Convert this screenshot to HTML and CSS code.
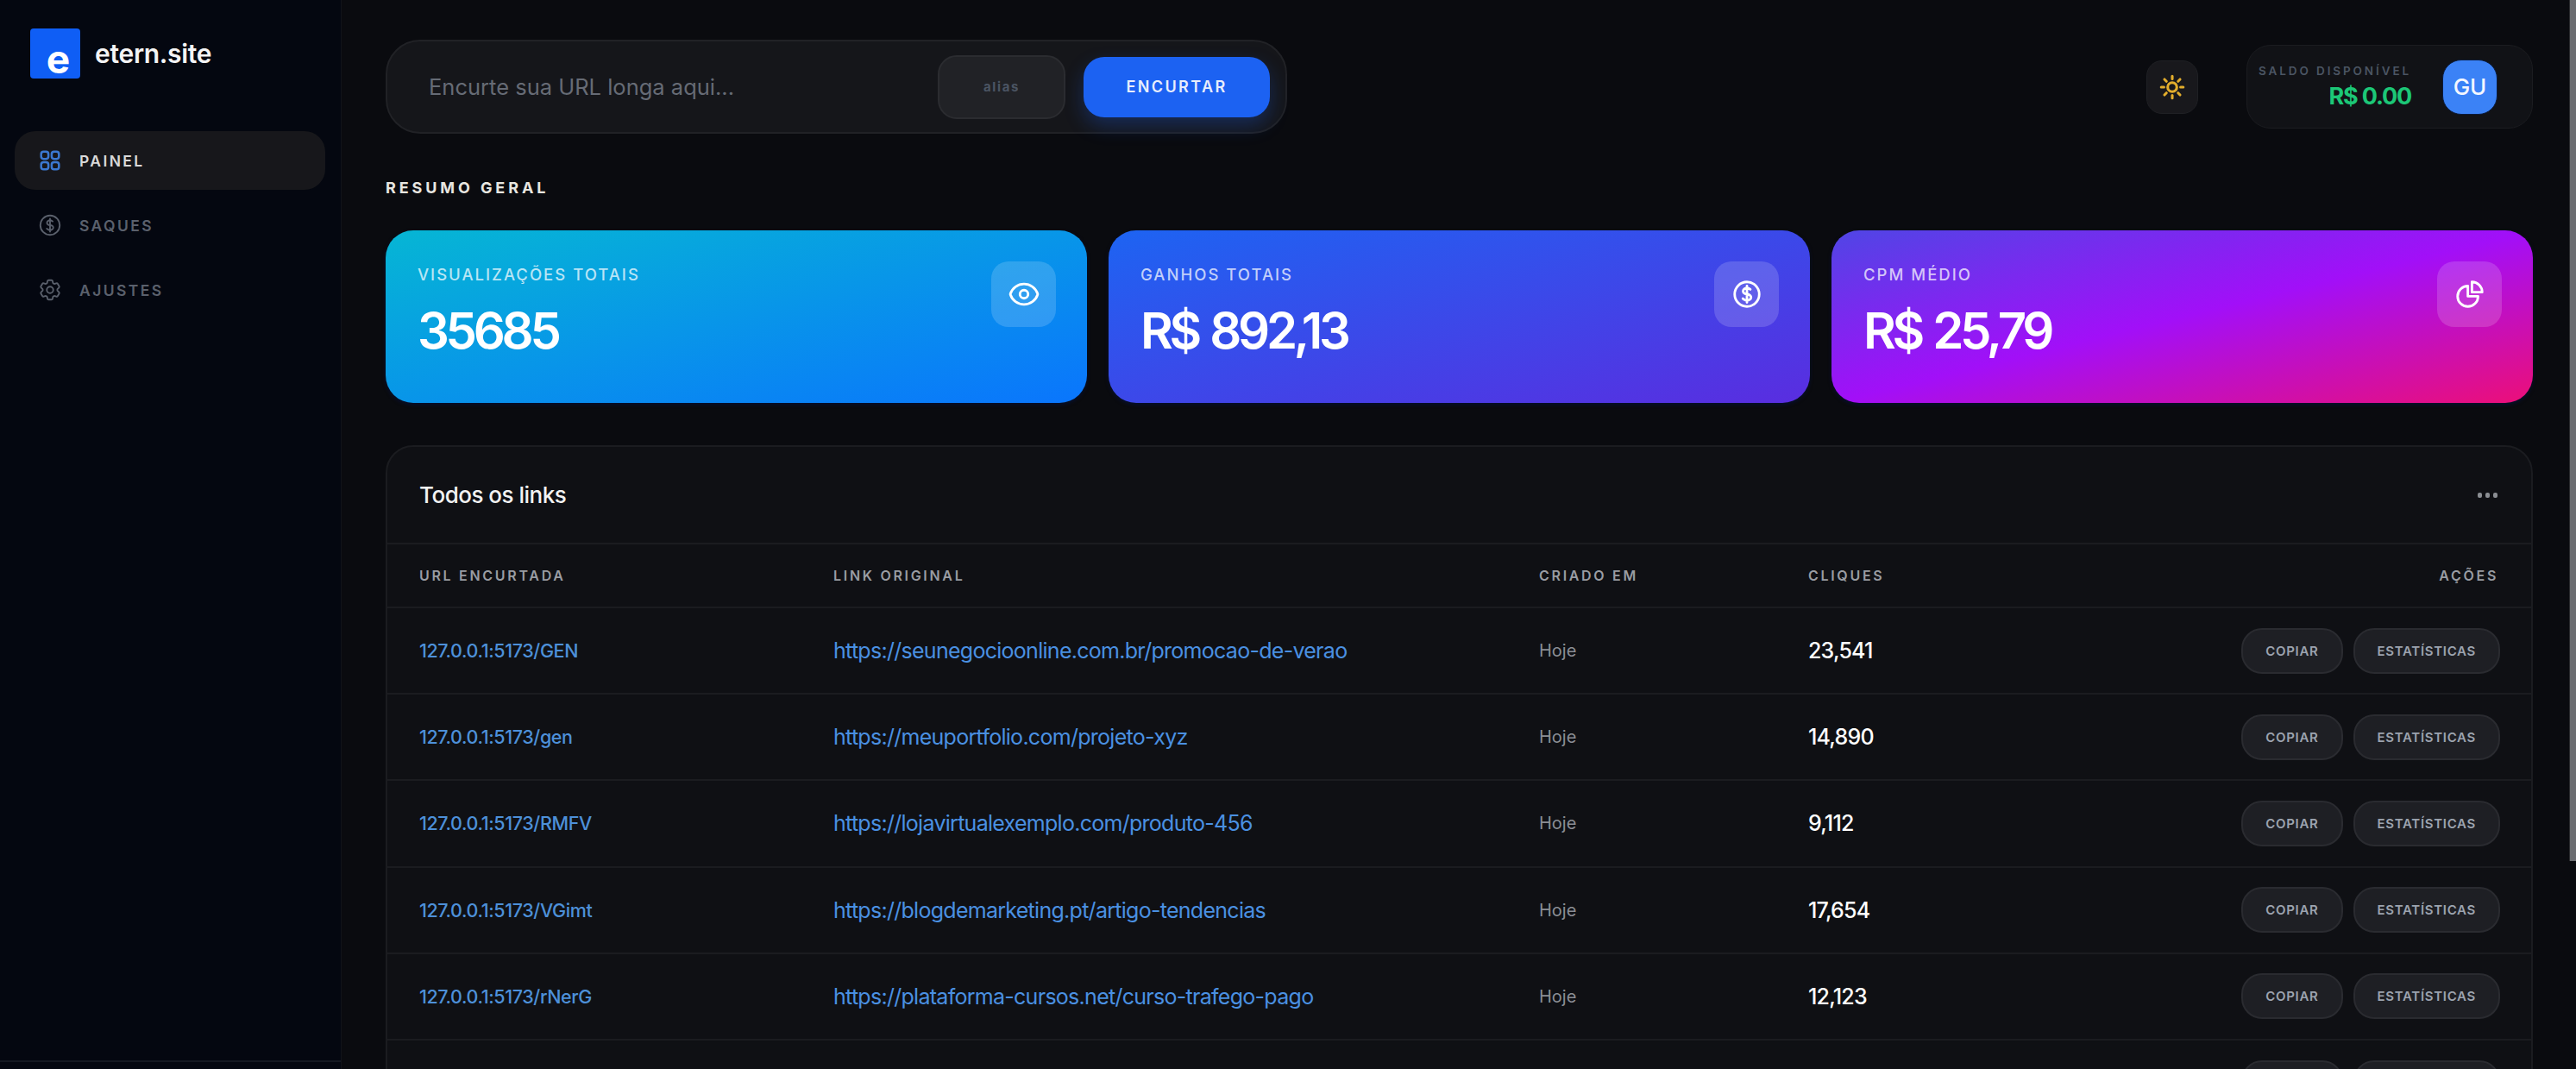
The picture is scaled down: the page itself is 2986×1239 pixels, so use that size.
FILE: index.html
```html
<!DOCTYPE html>
<html lang="pt-BR">
<head>
<meta charset="utf-8">
<title>etern.site</title>
<link rel="stylesheet" href="styles.css">
</head>
<body>
<aside class="sidebar">
  <div class="brand">
    <div class="brand-mark"><span>e</span></div>
    <span class="brand-name">etern.site</span>
  </div>
  <nav class="nav">
    <a class="nav-item active">
      <svg class="nav-icon" viewBox="0 0 24 24"><rect x="3.75" y="3.75" width="6.75" height="6.75" rx="2.25"/><rect x="3.75" y="13.5" width="6.75" height="6.75" rx="2.25"/><rect x="13.5" y="3.75" width="6.75" height="6.75" rx="2.25"/><rect x="13.5" y="13.5" width="6.75" height="6.75" rx="2.25"/></svg>
      <span>PAINEL</span>
    </a>
    <a class="nav-item">
      <svg class="nav-icon" viewBox="0 0 24 24"><path d="M12 6v12m-3-2.818.879.659c1.171.879 3.07.879 4.242 0 1.172-.879 1.172-2.303 0-3.182C13.536 12.219 12.768 12 12 12c-.725 0-1.45-.22-2.003-.659-1.106-.879-1.106-2.303 0-3.182s2.9-.879 4.006 0l.415.33M21 12a9 9 0 1 1-18 0 9 9 0 0 1 18 0Z"/></svg>
      <span>SAQUES</span>
    </a>
    <a class="nav-item">
      <svg class="nav-icon" viewBox="0 0 24 24"><path d="M9.594 3.94c.09-.542.56-.94 1.11-.94h2.593c.55 0 1.02.398 1.11.94l.213 1.281c.063.374.313.686.645.87.074.04.147.083.22.127.325.196.72.257 1.075.124l1.217-.456a1.125 1.125 0 0 1 1.37.49l1.296 2.247a1.125 1.125 0 0 1-.26 1.431l-1.003.827c-.293.241-.438.613-.43.992a7.723 7.723 0 0 1 0 .255c-.008.378.137.75.43.991l1.004.827c.424.35.534.955.26 1.43l-1.298 2.247a1.125 1.125 0 0 1-1.369.491l-1.217-.456c-.355-.133-.75-.072-1.076.124a6.47 6.47 0 0 1-.22.128c-.331.183-.581.495-.644.869l-.213 1.281c-.09.543-.56.94-1.11.94h-2.594c-.55 0-1.019-.398-1.11-.94l-.213-1.281c-.062-.374-.312-.686-.644-.87a6.52 6.52 0 0 1-.22-.127c-.325-.196-.72-.257-1.076-.124l-1.217.456a1.125 1.125 0 0 1-1.369-.49l-1.297-2.247a1.125 1.125 0 0 1 .26-1.431l1.004-.827c.292-.24.437-.613.43-.991a6.932 6.932 0 0 1 0-.255c.007-.38-.138-.751-.43-.992l-1.004-.827a1.125 1.125 0 0 1-.26-1.43l1.297-2.247a1.125 1.125 0 0 1 1.37-.491l1.216.456c.356.133.751.072 1.076-.124.072-.044.146-.086.22-.128.332-.183.582-.495.644-.869l.214-1.28Z"/><path d="M15 12a3 3 0 1 1-6 0 3 3 0 0 1 6 0Z"/></svg>
      <span>AJUSTES</span>
    </a>
  </nav>
  <div class="sidebar-foot"></div>
</aside>

<main class="main">
  <header class="topbar">
    <form class="shorten">
      <span class="shorten-placeholder">Encurte sua URL longa aqui...</span>
      <span class="alias">alias</span>
      <button class="shorten-btn" type="button">ENCURTAR</button>
    </form>
    <div class="top-right">
      <button class="theme-btn" type="button">
        <svg viewBox="0 0 24 24"><path d="M12 3v2.25m6.364.386-1.591 1.591M21 12h-2.25m-.386 6.364-1.591-1.591M12 18.75V21m-4.773-4.227-1.591 1.591M5.25 12H3m4.227-4.773L5.636 5.636M15.75 12a3.75 3.75 0 1 1-7.5 0 3.75 3.75 0 0 1 7.5 0Z"/></svg>
      </button>
      <div class="balance">
        <div class="balance-text">
          <span class="balance-label">SALDO DISPONÍVEL</span>
          <span class="balance-value">R$ 0.00</span>
        </div>
        <div class="avatar">GU</div>
      </div>
    </div>
  </header>

  <h2 class="section-title">RESUMO GERAL</h2>

  <section class="stats">
    <article class="stat stat-cyan">
      <div>
        <div class="stat-label">VISUALIZAÇÕES TOTAIS</div>
        <div class="stat-value">35685</div>
      </div>
      <div class="stat-icon"><svg viewBox="0 0 24 24"><path d="M2.036 12.322a1.012 1.012 0 0 1 0-.639C3.423 7.51 7.36 4.5 12 4.5c4.638 0 8.573 3.007 9.963 7.178.07.207.07.431 0 .639C20.577 16.49 16.64 19.5 12 19.5c-4.638 0-8.573-3.007-9.963-7.178Z"/><path d="M15 12a3 3 0 1 1-6 0 3 3 0 0 1 6 0Z"/></svg></div>
    </article>
    <article class="stat stat-blue">
      <div>
        <div class="stat-label">GANHOS TOTAIS</div>
        <div class="stat-value">R$ 892,13</div>
      </div>
      <div class="stat-icon"><svg viewBox="0 0 24 24"><path d="M12 6v12m-3-2.818.879.659c1.171.879 3.07.879 4.242 0 1.172-.879 1.172-2.303 0-3.182C13.536 12.219 12.768 12 12 12c-.725 0-1.45-.22-2.003-.659-1.106-.879-1.106-2.303 0-3.182s2.9-.879 4.006 0l.415.33M21 12a9 9 0 1 1-18 0 9 9 0 0 1 18 0Z"/></svg></div>
    </article>
    <article class="stat stat-purple">
      <div>
        <div class="stat-label">CPM MÉDIO</div>
        <div class="stat-value">R$ 25,79</div>
      </div>
      <div class="stat-icon"><svg viewBox="0 0 24 24"><path d="M10.5 6a7.5 7.5 0 1 0 7.5 7.5h-7.5V6Z"/><path d="M13.5 10.5H21A7.5 7.5 0 0 0 13.5 3v7.5Z"/></svg></div>
    </article>
  </section>

  <section class="links">
    <div class="links-head">
      <h3>Todos os links</h3>
      <div class="more"><i></i><i></i><i></i></div>
    </div>
    <table class="links-table">
      <colgroup>
        <col class="c-short"><col class="c-orig"><col class="c-date"><col class="c-clicks"><col>
      </colgroup>
      <thead>
        <tr><th>URL ENCURTADA</th><th>LINK ORIGINAL</th><th>CRIADO EM</th><th>CLIQUES</th><th class="right">AÇÕES</th></tr>
      </thead>
      <tbody>
        <tr>
          <td class="short">127.0.0.1:5173/GEN</td>
          <td class="orig">https://seunegocioonline.com.br/promocao-de-verao</td>
          <td class="date">Hoje</td>
          <td class="clicks">23,541</td>
          <td class="right"><div class="actions"><button type="button">COPIAR</button><button type="button">ESTATÍSTICAS</button></div></td>
        </tr>
        <tr>
          <td class="short">127.0.0.1:5173/gen</td>
          <td class="orig">https://meuportfolio.com/projeto-xyz</td>
          <td class="date">Hoje</td>
          <td class="clicks">14,890</td>
          <td class="right"><div class="actions"><button type="button">COPIAR</button><button type="button">ESTATÍSTICAS</button></div></td>
        </tr>
        <tr>
          <td class="short">127.0.0.1:5173/RMFV</td>
          <td class="orig">https://lojavirtualexemplo.com/produto-456</td>
          <td class="date">Hoje</td>
          <td class="clicks">9,112</td>
          <td class="right"><div class="actions"><button type="button">COPIAR</button><button type="button">ESTATÍSTICAS</button></div></td>
        </tr>
        <tr>
          <td class="short">127.0.0.1:5173/VGimt</td>
          <td class="orig">https://blogdemarketing.pt/artigo-tendencias</td>
          <td class="date">Hoje</td>
          <td class="clicks">17,654</td>
          <td class="right"><div class="actions"><button type="button">COPIAR</button><button type="button">ESTATÍSTICAS</button></div></td>
        </tr>
        <tr>
          <td class="short">127.0.0.1:5173/rNerG</td>
          <td class="orig">https://plataforma-cursos.net/curso-trafego-pago</td>
          <td class="date">Hoje</td>
          <td class="clicks">12,123</td>
          <td class="right"><div class="actions"><button type="button">COPIAR</button><button type="button">ESTATÍSTICAS</button></div></td>
        </tr>
        <tr>
          <td class="short"></td>
          <td class="orig"></td>
          <td class="date"></td>
          <td class="clicks"></td>
          <td class="right"><div class="actions"><button type="button">COPIAR</button><button type="button">ESTATÍSTICAS</button></div></td>
        </tr>
      </tbody>
    </table>
  </section>
</main>
<div class="scroll-thumb"></div>
</body>
</html>
```
FILE: styles.css
```css
* { box-sizing: border-box; }
html, body { margin: 0; height: 100%; }
body {
  display: flex;
  align-items: flex-start;
  height: 1239px;
  overflow: hidden;
  background: #0a0b0f;
  color: #fff;
  font-family: Inter, "Liberation Sans", sans-serif;
}
svg { fill: none; stroke: currentColor; stroke-width: 1.5; stroke-linecap: round; stroke-linejoin: round; display: block; }

.sidebar {
  width: 396px;
  flex: none;
  height: 100%;
  background: #040710;
  border-right: 1px solid #12141a;
  display: flex;
  flex-direction: column;
  padding: 33px 18px 0 17px;
}
.brand { display: flex; align-items: center; gap: 17px; padding-left: 18px; }
.brand-mark {
  width: 58px; height: 58px; background: #0f5ef5; border-radius: 4px;
  display: flex; align-items: flex-end; justify-content: center;
  padding-left: 7px;
}
.brand-mark span { font-size: 46px; font-weight: 700; line-height: 46px; margin-bottom: 0; }
.brand-name { font-size: 30px; font-weight: 600; letter-spacing: -.3px; color: #f4f4f5; }
.nav { margin-top: 61px; display: flex; flex-direction: column; gap: 7px; }
.nav-item {
  height: 68px; border-radius: 24px; display: flex; align-items: center; gap: 19px;
  padding-left: 27px; color: #5a606c; font-size: 17.5px; font-weight: 600; letter-spacing: 2.4px;
}
.nav-item.active { background: #17171b; color: #d9d9d9; }
.nav-item.active .nav-icon { color: #3b78d0; stroke-width: 2; }
.nav-icon { width: 30px; height: 30px; margin-left: -1px; }
.sidebar-foot { margin: auto -18px 8px -17px; border-top: 2px solid #141821; }

.main { flex: 1; min-width: 0; padding: 46px 42px 0 51px; }

.topbar { display: flex; justify-content: space-between; align-items: center; height: 109px; }
.shorten {
  width: 1045px; height: 109px; border-radius: 40px; background: #15161a; border: 2px solid #212226;
  display: flex; align-items: center; padding: 0 18px 0 48px; margin: 0;
}
.shorten-placeholder { flex: 1; color: #666b75; font-size: 25.5px; }
.alias {
  width: 148px; height: 74px; border-radius: 22px; background: #212226; border: 2px solid #2b2c30;
  display: flex; align-items: center; justify-content: center;
  color: #4b5563; font-size: 15px; font-weight: 700; letter-spacing: 1.6px;
}
.shorten-btn {
  width: 216px; height: 70px; margin-left: 21px; border: 0; border-radius: 24px; background: #1c62f2;
  color: #e8eefc; font: 600 18px Inter, sans-serif; letter-spacing: 2.4px;
  box-shadow: 0 10px 22px rgba(28, 98, 242, .28);
}
.top-right { display: flex; align-items: center; gap: 56px; }
.theme-btn {
  width: 60px; height: 62px; padding: 0; border: 1px solid #1f2024; border-radius: 18px; background: #18181c; color: #e2ad2c;
  display: flex; align-items: center; justify-content: center;
}
.theme-btn svg { width: 34px; height: 34px; stroke-width: 2.2; }
.balance {
  width: 332px; height: 97px; border-radius: 28px; background: #111216; border: 1px solid #1b1c20;
  display: flex; align-items: center; padding: 0 40px 0 13px; justify-content: space-between;
}
.balance-text { display: flex; flex-direction: column; align-items: flex-end; gap: 7px; }
.balance-label { color: #4b5563; font-size: 13.5px; font-weight: 600; letter-spacing: 2.9px; white-space: nowrap; }
.balance-value { color: #1cc777; font-size: 27px; font-weight: 700; line-height: 30px; letter-spacing: -1.2px; }
.avatar {
  width: 64px; height: 64px; border-radius: 22px; background: #3b82f6; border: 1px solid #0a1a3a;
  display: flex; align-items: center; justify-content: center; font-size: 26px; font-weight: 500; color: #f4f7ff;
}

.section-title {
  margin: 53px 0 0; font-size: 18px; line-height: 20px; font-weight: 700; letter-spacing: 3.9px; color: #e8e6e0;
}

.stats { margin-top: 39px; display: grid; grid-template-columns: repeat(3, 1fr); gap: 25px; }
.stat {
  height: 200px; border-radius: 32px; padding: 36px 36px 0 37px;
  display: flex; justify-content: space-between; align-items: flex-start;
  box-shadow: 0 2px 4px rgba(0, 20, 80, .5);
}
.stat-cyan { background: linear-gradient(to bottom right, #06b6d4, #0a75fd); }
.stat-blue { background: linear-gradient(to bottom right, #1d64f2, #5a2de0); }
.stat-purple { background: linear-gradient(to bottom right, #4f46e5, #a20ff8 50%, #ec0f78); }
.stat-label { color: rgba(255, 255, 255, .72); font-size: 18.5px; line-height: 30px; font-weight: 500; letter-spacing: 2px; }
.stat-value { margin-top: 15px; font-size: 58px; line-height: 70px; font-weight: 600; letter-spacing: -4.3px; word-spacing: 3px; }
.stat-icon {
  width: 75px; height: 76px; border-radius: 20px; background: rgba(255, 255, 255, .16);
  display: flex; align-items: center; justify-content: center; flex: none;
}
.stat-icon svg { width: 38px; height: 38px; stroke-width: 1.8; }

.links {
  margin-top: 49px; background: #0f1014; border: 2px solid #1b1c20; border-radius: 32px; overflow: hidden;
}
.links-head {
  height: 113px; display: flex; align-items: center; justify-content: space-between; padding: 0 39px 0 37px;
  border-bottom: 2px solid #1b1c20;
}
.links-head h3 { margin: 0; font-size: 26px; font-weight: 500; letter-spacing: -.5px; color: #f2f2f2; }
.more { display: flex; gap: 4px; }
.more i { width: 5px; height: 6px; border-radius: 2px; background: #8a8d92; }

.links-table { width: 100%; border-collapse: collapse; table-layout: fixed; }
.c-short { width: 479px; }
.c-orig { width: 818px; }
.c-date { width: 312px; }
.c-clicks { width: 300px; }
.links-table th, .links-table td { padding: 0 38px; text-align: left; white-space: nowrap; }
.links-table th:first-child, .links-table td:first-child { padding-left: 37px; }
.links-table th {
  height: 73px; color: #9a9da3; font-size: 16px; font-weight: 600; letter-spacing: 2.7px;
  border-bottom: 2px solid #1b1c20;
}
.links-table td { height: 100.2px; border-bottom: 2px solid #1b1c20; }
.links-table .right { text-align: right; }
.short { color: #4d90d9; font-size: 21.5px; font-weight: 500; letter-spacing: -.4px; }
.orig { color: #4a90e2; font-size: 25px; font-weight: 400; letter-spacing: -.72px; }
.date { color: #8b8e95; font-size: 20px; }
.clicks { color: #fff; font-size: 25px; font-weight: 500; letter-spacing: -.8px; }
.actions { display: flex; justify-content: flex-end; gap: 12px; margin-right: -2px; }
.actions button {
  height: 53px; padding: 0 26px; border: 2px solid #2a2b30; border-radius: 24px; background: #1e1f24;
  color: #9ca3af; font: 600 15px Inter, sans-serif; letter-spacing: .7px;
}
.scroll-thumb { width: 8px; height: 998px; flex: none; background: #6b6c70; border-left: 1px solid #2a2b2e; }
```
